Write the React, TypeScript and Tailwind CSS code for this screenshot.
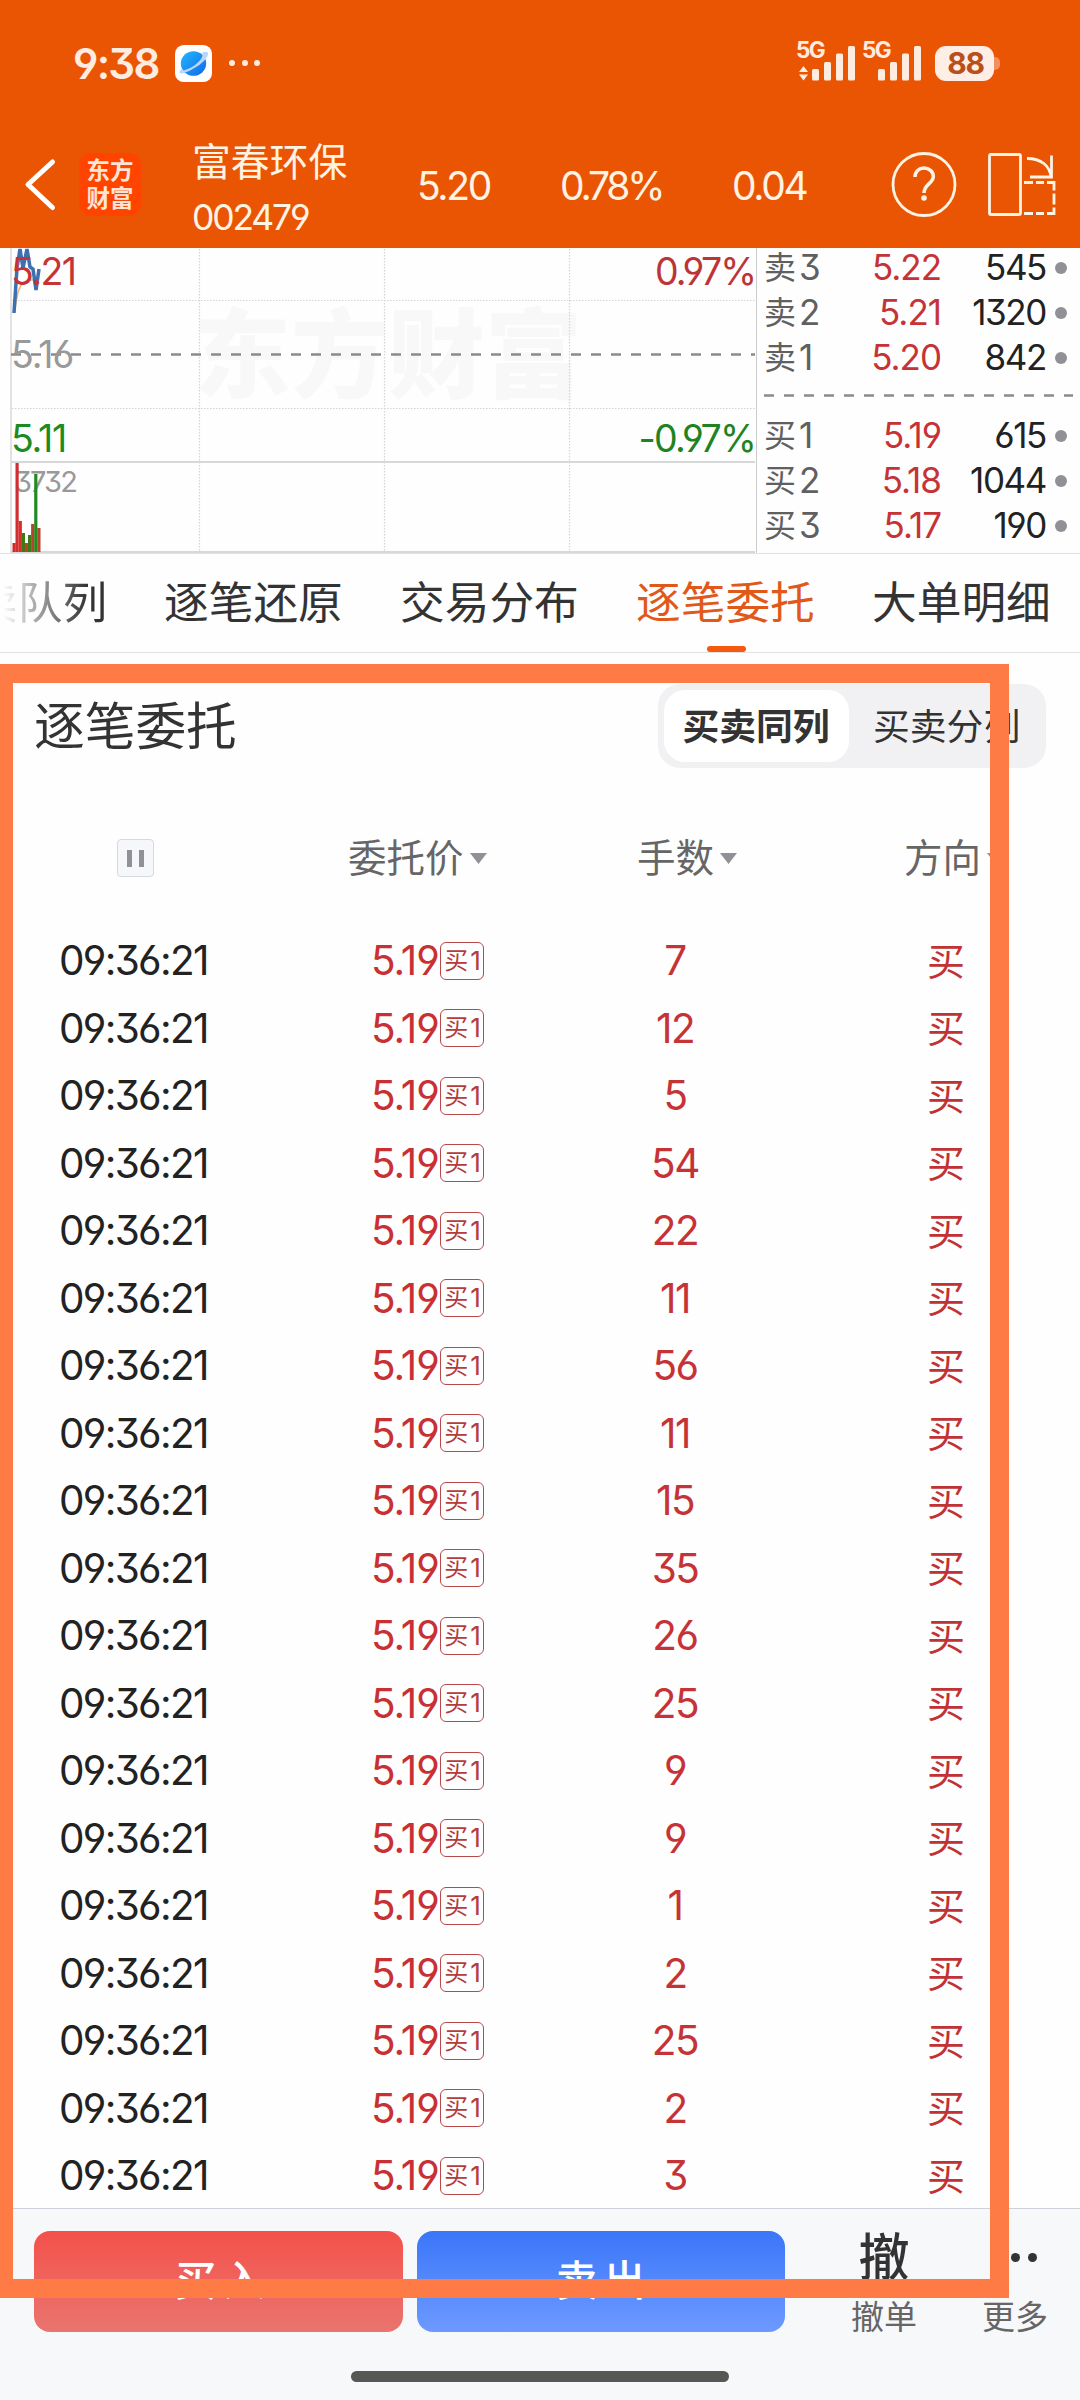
import React from "react";

const NUM =
  "font-[Inter,'Noto_Sans_CJK_SC',sans-serif] [font-feature-settings:'cv03','cv04','cv09']";

const asks = [
  { label: "卖", level: "3", price: "5.22", volume: "545" },
  { label: "卖", level: "2", price: "5.21", volume: "1320" },
  { label: "卖", level: "1", price: "5.20", volume: "842" },
];
const bids = [
  { label: "买", level: "1", price: "5.19", volume: "615" },
  { label: "买", level: "2", price: "5.18", volume: "1044" },
  { label: "买", level: "3", price: "5.17", volume: "190" },
];
const tabs = ["逐笔还原", "交易分布", "逐笔委托", "大单明细"];
const lots = [7, 12, 5, 54, 22, 11, 56, 11, 15, 35, 26, 25, 9, 9, 1, 2, 25, 2, 3];

function Signal({ arrows }: { arrows?: boolean }) {
  return (
    <div className="relative h-[42px] w-[59px]">
      <span className="absolute -left-px top-0 text-[22.500px] leading-[21px] font-bold tracking-[-1.600px]">5G</span>
      <svg className="absolute inset-0" width="59" height="42" viewBox="0 0 59 42" fill="currentColor">
        {arrows && <path d="M6.500 27l4.500 6H2zM6.500 41.500l4.500-6H2z" />}
        <rect x="15" y="30" width="7" height="11.500" rx="1.500" />
        <rect x="27" y="23" width="7" height="18.500" rx="1.500" />
        <rect x="39" y="14.500" width="7" height="27" rx="1.500" />
        <rect x="51" y="7" width="7" height="34.500" rx="1.500" />
      </svg>
    </div>
  );
}

function StatusBar() {
  return (
    <div className="flex h-[131px] shrink-0 items-start pt-[39px] pl-[73px] text-[#ffece0]">
      <span className="mt-[3px] w-[102px] text-[42px] leading-[44px] font-semibold tracking-[-1.700px]">9:38</span>
      <svg className="mt-[6px]" width="37" height="37" viewBox="0 0 38 39" preserveAspectRatio="none">
        <defs>
          <linearGradient id="planet" x1="0" y1="0" x2="1" y2="1">
            <stop offset="0" stopColor="#22b8ff" />
            <stop offset="1" stopColor="#1168e8" />
          </linearGradient>
        </defs>
        <rect width="38" height="39" rx="9" fill="#fff" />
        <circle cx="19" cy="19.500" r="13" fill="url(#planet)" />
        <path d="M28 8c4-1.600 6.500-1 6 2-1 5.500-10 12.500-18 16.500-5 2.500-10 4.500-11 3-.8-1.200.4-3 2-4.500 0 1.700 1 2 3 1.500 8-2 20.500-11.500 18-18.500z" fill="#b9d6fb" />
      </svg>
      <div className="mt-[21px] ml-[17px] flex gap-[6.500px]">
        <i className="size-[6px] rounded-full bg-current" />
        <i className="size-[6px] rounded-full bg-current" />
        <i className="size-[6px] rounded-full bg-current" />
      </div>
      <div className="ml-auto flex w-[283px] items-start gap-[7px]">
        <Signal arrows />
        <Signal />
        <div className="ml-[6px] mt-[6.500px] flex items-center">
          <div className="flex h-[35px] w-[59px] items-center justify-center rounded-[11px] bg-[#ffeee6] pl-[2px] text-[30px] leading-none font-bold tracking-[-1.200px] text-[#b9501c]">
            88
          </div>
          <i className="h-[13px] w-[6px] rounded-r-[5px] bg-[#f08f5f]" />
        </div>
      </div>
    </div>
  );
}

function TitleBar() {
  return (
    <div className="flex h-[117px] items-start text-[#fff3e4]">
      <svg className="mt-[26px] ml-[24px]" width="34" height="56" viewBox="0 0 34 56" fill="none" stroke="#fff" strokeWidth="5" strokeLinecap="round" strokeLinejoin="round">
        <path d="M28.500 5L4 27.500l24.500 23" />
      </svg>
      <div className="mt-[22px] ml-[21px] flex h-[63px] w-[62px] flex-col items-center justify-center rounded-[12px] bg-[#ff4400] text-[23.500px] leading-[27.500px] font-bold text-[#ffe4d6]">
        <span>东方</span>
        <span>财富</span>
      </div>
      <div className="ml-[51px] w-[225px]">
        <div className="mt-[4px] text-[38.800px] leading-[54px]">富春环保</div>
        <div className="text-[35.500px] leading-[57px] tracking-[-2.200px]">002479</div>
      </div>
      <span className="mt-[25px] w-[143px] text-[39px] leading-[60px] tracking-[-2.300px]">5.20</span>
      <span className="mt-[25px] w-[172px] text-[39px] leading-[60px] tracking-[-3.200px]">0.78%</span>
      <span className="mt-[25px] w-[159px] text-[39px] leading-[60px] tracking-[-2.300px]">0.04</span>
      <svg className="mt-[20px]" width="66" height="68" viewBox="0 0 66 68" fill="none" stroke="currentColor" strokeWidth="2.800">
        <circle cx="33" cy="33.500" r="31" />
        <path d="M24 26c0-5.500 4-9 9-9s9.300 3.500 9.300 8.500c0 7-9.300 7.500-9.300 16.500" strokeWidth="3.500" />
        <circle cx="33" cy="47" r="2.800" fill="currentColor" stroke="none" />
      </svg>
      <svg className="mt-[20px] ml-[31px]" width="70" height="68" viewBox="0 0 70 68" fill="none" stroke="currentColor" strokeWidth="2.800">
        <rect x="1.500" y="3.500" width="31" height="60" rx="1.500" />
        <path d="M39 7.500c14 0 23 7 24 19M63.500 4.500v21.500H42" />
        <path d="M36 31.500h9m3 0h8m3 0h7v8m0 3v11m0 3v6h-7m-3 0h-8m-3 0h-9" />
      </svg>
    </div>
  );
}

function Chart() {
  const volumeBars = [
    { x: 12.500, h: 9, c: "#d02a2a" },
    { x: 15.500, h: 89, c: "#cf2f33" },
    { x: 18.700, h: 31, c: "#e02b2b" },
    { x: 21.800, h: 19, c: "#3b7a14" },
    { x: 24.900, h: 9, c: "#b8452a" },
    { x: 28, h: 17, c: "#3b7a14" },
    { x: 31.100, h: 28, c: "#b8452a" },
    { x: 34.200, h: 78, c: "#218a21" },
    { x: 37.300, h: 24, c: "#b8452a" },
  ];
  return (
    <div className="relative h-[305px] w-[756px] overflow-hidden">
      <div className="absolute left-[194px] top-[49px] text-[97px] leading-[116px] font-black text-[#f8f8f8]">东方财富</div>
      <div className="absolute left-[14px] top-[218px] text-[29px] leading-[32px] tracking-[-1.900px] text-[#999]">3732</div>
      <svg className="absolute inset-0" width="756" height="305" viewBox="0 248 756 305" fill="none">
        <g stroke="#d4d4d4" strokeWidth="1.200" strokeDasharray="1.500 1.500">
          <path d="M199.500 249V552M384.500 249V552M569.500 249V552M12 300.500H755M12 408.500H755" />
        </g>
        <path d="M11 248V553" stroke="#e2e2e2" strokeWidth="2" />
        <path d="M11 462H755M11 552H755" stroke="#d8d8d8" strokeWidth="2" />
        <path d="M11 354.500H755" stroke="#8a8a8a" strokeWidth="2.500" strokeDasharray="10 10" />
        <path d="M15 308l3-16 4-9 6-3 6 0 4-2" stroke="#f0b070" strokeWidth="1.500" />
        <path d="M14 313L17 268 20 249 23 268 27 249 30 267 33 269 36 290 39 269" stroke="#3d70b0" strokeWidth="3.500" />
        {volumeBars.map((b) => (
          <rect key={b.x} x={b.x} y={552 - b.h} width="3.200" height={b.h} fill={b.c} />
        ))}
      </svg>
      <div className="absolute left-[11px] top-[6px] text-[37.500px] leading-[36px] tracking-[-1.600px] text-[#c63336]">5.21</div>
      <div className="absolute left-[11px] top-[89px] text-[37.500px] leading-[36px] tracking-[-1px] text-[#999]">5.16</div>
      <div className="absolute left-[11px] top-[173px] text-[37.500px] leading-[36px] tracking-[-1.200px] text-[#1e8a22]">5.11</div>
      <div className="absolute right-[1px] top-[6px] text-[37.500px] leading-[36px] tracking-[-2px] text-[#bd3437]">0.97%</div>
      <div className="absolute right-[1px] top-[173px] text-[37.500px] leading-[36px] tracking-[-1.800px] text-[#1e8422]">-0.97%</div>
    </div>
  );
}

function BookRow({ row }: { row: (typeof asks)[number] }) {
  return (
    <div className="flex h-[45px] items-center text-[35px] leading-[45px] tracking-[-1.400px]">
      <span className="flex w-[80px] gap-[3px] text-[#606060]">
        <span className="text-[32px] tracking-normal">{row.label}</span>
        <span>{row.level}</span>
      </span>
      <span className="w-[97px] text-right tracking-[-1px] text-[#c63336]">{row.price}</span>
      <span className="w-[105px] text-right text-[#222]">{row.volume}</span>
      <i className="ml-[9px] size-[12px] rounded-full bg-[#909096]" />
    </div>
  );
}

function OrderBook() {
  return (
    <div className="flex-1 border-l border-[#ccc] pl-[7px]">
      <div className="mt-[-3px]">
        {asks.map((r) => (
          <BookRow key={r.level} row={r} />
        ))}
      </div>
      <svg className="mt-[14px] mb-[16px] block" width="309" height="3" viewBox="0 0 309 3">
        <path d="M0 1.500h309" stroke="#8a8a8a" strokeWidth="2.500" strokeDasharray="10 10" />
      </svg>
      {bids.map((r) => (
        <BookRow key={r.level} row={r} />
      ))}
    </div>
  );
}

function Tabs() {
  return (
    <nav className="relative flex h-[99px] shrink-0 gap-14 overflow-hidden border-b border-[#e2e2e2] text-[44.700px] leading-[99px] whitespace-nowrap text-[#333]">
      <div className="-ml-[27px] w-[135px] shrink-0 bg-linear-to-r from-white from-22% to-[#333] to-85% bg-clip-text text-transparent">
        卖队列
      </div>
      {tabs.map((t) => (
        <div key={t} className={t === "逐笔委托" ? "relative w-[180px] shrink-0 text-[#e0591a]" : "w-[180px] shrink-0"}>
          {t}
          {t === "逐笔委托" && <i className="absolute top-[92px] left-[71px] h-[6px] w-[39px] rounded-full bg-[#f4590f]" />}
        </div>
      ))}
    </nav>
  );
}

function Caret() {
  return (
    <svg width="17" height="11" viewBox="0 0 17 11">
      <path d="M0 0h17L8.500 11z" fill="#909096" />
    </svg>
  );
}

function Orders() {
  return (
    <section className="flex h-[1555px] shrink-0 flex-col">
      <div className="mt-[31px] flex h-[84px] items-center justify-between pr-[34px] pl-[34px]">
        <h1 className="pt-[2px] text-[50.700px] leading-[60px] text-[#333]">逐笔委托</h1>
        <div className="flex h-[84px] w-[388px] rounded-[22px] bg-[#f1f1f4] p-[6px] text-[36.800px] leading-[73px] text-[#333]">
          <div className="w-[185px] rounded-[21px] bg-white pr-[1px] text-center font-semibold">买卖同列</div>
          <div className="w-[190px] pl-[24px]">买卖分列</div>
        </div>
      </div>
      <div className="mt-[62px] flex h-[60px] items-center text-[38.500px] text-[#666]">
        <div className="mb-[1px] ml-[117px] flex h-[38px] w-[37px] items-center justify-center gap-[7px] rounded-[4px] border border-[#d5dae0] bg-[#f5f7fa]">
          <i className="h-[17px] w-[5px] bg-[#909096]" />
          <i className="h-[17px] w-[5px] bg-[#909096]" />
        </div>
        <div className="ml-[194px] flex w-[289px] items-center gap-[6px]">委托价<Caret /></div>
        <div className="flex w-[267px] items-center gap-[6px]">手数<Caret /></div>
        <div className="flex items-center gap-[6px]">方向<Caret /></div>
      </div>
      <div className="mt-[39px]">
        {lots.map((n, i) => (
          <div key={i} className="grid h-[67.500px] grid-cols-[372px_240px_127px_1fr] items-center text-[40.500px] leading-[60px]">
            <span className="pt-[1px] pl-[59px] tracking-[-1.700px] text-[#222]">09:36:21</span>
            <span className="flex items-center text-[#c93033]">
              <span className="-ml-px w-[69px] pt-[1px] tracking-[-1px]">5.19</span>
              <span className="flex h-[38px] w-[44px] items-center justify-center gap-[2px] rounded-[6px] border border-[#b8484a] text-[26px] leading-none text-[#b53b3c]">
                <span className="text-[24px]">买</span>
                <span className="-mr-[1px]">1</span>
              </span>
            </span>
            <span className="pt-[1px] pr-[1px] text-center tracking-[-1.500px] text-[#c63336]">{n}</span>
            <span className="pl-[188px] text-[38px] leading-[58px] text-[#c13235]">买</span>
          </div>
        ))}
      </div>
    </section>
  );
}

function Footer() {
  return (
    <footer className="flex flex-1 flex-col border-t border-[#cdd2da] bg-[#f7f8fa]">
      <div className="flex pt-[22px] pl-[34px]">
        <div className="h-[101px] w-[369px] rounded-[16px] bg-linear-to-b from-[#f4504a] to-[#e9746e] pl-[8px] text-center text-[42px] leading-[100px] font-medium tracking-[6px] text-white">买入</div>
        <div className="ml-[14px] h-[101px] w-[368px] rounded-[16px] bg-linear-to-b from-[#3a76f8] to-[#6d99ff] pl-[5px] text-center text-[42px] leading-[100px] font-medium tracking-[6px] text-white">卖出</div>
        <div className="ml-[49px] flex w-[100px] flex-col items-center">
          <span className="h-[50px] text-[51px] leading-[54px] font-medium text-[#333]">撤</span>
          <span className="mt-[14px] text-[33px] leading-[44px] text-[#666]">撤单</span>
        </div>
        <div className="ml-[31px] flex w-[100px] flex-col items-center">
          <div className="flex h-[50px] items-center gap-[8px] pt-[2px]">
            <i className="size-[9px] rounded-full bg-[#333]" />
            <i className="size-[9px] rounded-full bg-[#333]" />
            <i className="size-[9px] rounded-full bg-[#333]" />
          </div>
          <span className="mt-[14px] text-[33px] leading-[44px] text-[#666]">更多</span>
        </div>
      </div>
      <div className="mt-auto mb-[18px] ml-[351px] h-[11px] w-[378px] rounded-full bg-[#565856]" />
    </footer>
  );
}

export default function App() {
  return (
    <div className={"relative flex h-[2400px] w-[1080px] flex-col overflow-hidden bg-[#fefefe] " + NUM}>
      <header className="h-[248px] shrink-0 bg-[#ea5504]">
        <StatusBar />
        <TitleBar />
      </header>
      <div className="flex h-[306px] shrink-0 border-b border-[#e2e2e2]">
        <Chart />
        <OrderBook />
      </div>
      <Tabs />
      <Orders />
      <Footer />
      <div className="pointer-events-none absolute top-[664px] left-0 h-[1634px] w-[1009px] border-[19px] border-l-[13px] border-[#ff7b45]" />
    </div>
  );
}
